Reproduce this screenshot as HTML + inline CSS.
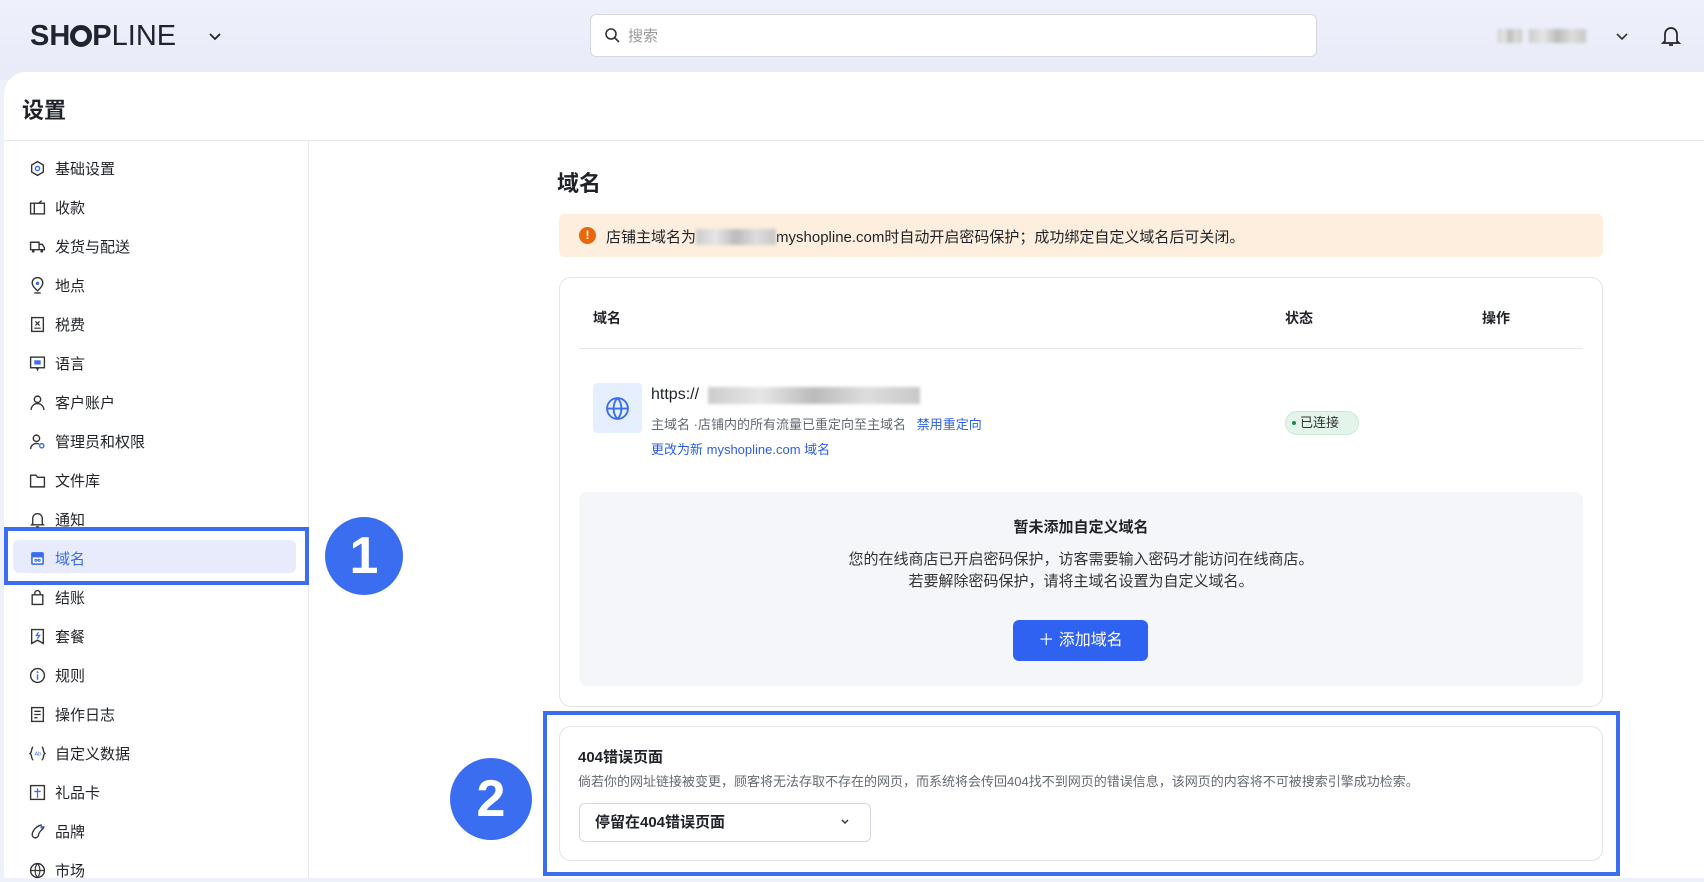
<!DOCTYPE html>
<html><head><meta charset="utf-8"><style>
*{box-sizing:border-box;margin:0;padding:0}
body{width:1704px;height:878px;overflow:hidden;position:relative;font-family:"Liberation Sans","Noto Sans CJK SC",sans-serif;color:#1f2329;background:#eef0fa}
.a{position:absolute}
.hdr{left:0;top:0;width:1704px;height:80px;background:linear-gradient(#eef0fa,#e8ebf8)}
.panel{left:4px;top:72px;width:1700px;height:806px;background:#fff;border-top-left-radius:22px}
.nav{left:29px;font-size:15px;color:#1f2329;display:flex;align-items:center;height:24px}
.nav svg{width:17px;height:17px;margin-right:9px}
.blur{background:linear-gradient(90deg,#ccc,#e6e6e6,#bbb,#ddd,#c8c8c8);filter:blur(1.5px)}
.circ{border-radius:50%;background:#3a6df0;color:#fff;font-size:52px;font-weight:bold;display:flex;align-items:center;justify-content:center;font-family:"Liberation Sans",sans-serif}
</style></head><body>
<div class="a hdr"></div>
<div class="a" style="left:30px;top:20px;font-size:29px;font-weight:bold;letter-spacing:0px;color:#1e2430">SH<span style="display:inline-block;width:22px;height:22px;border:5px solid #1e2430;border-radius:50%;vertical-align:-2px"></span>P<span style="font-weight:normal">LINE</span></div>
<svg class="a" style="left:208px;top:29px" width="14" height="14" viewBox="0 0 14 14"><path d="M2 5l5 5 5-5" stroke="#1e2430" stroke-width="1.8" fill="none"/></svg>
<div class="a" style="left:590px;top:14px;width:727px;height:43px;background:#fff;border:1px solid #d5d8e2;border-radius:6px"></div>
<svg class="a" style="left:604px;top:27px" width="16" height="16" viewBox="0 0 16 16"><circle cx="7" cy="7" r="5" stroke="#333" stroke-width="1.6" fill="none"/><path d="M11 11l4 4" stroke="#333" stroke-width="1.6"/></svg>
<div class="a" style="left:628px;top:25px;font-size:15px;color:#999">搜索</div>
<div class="a blur" style="left:1498px;top:29px;width:24px;height:14px"></div>
<div class="a blur" style="left:1529px;top:29px;width:57px;height:14px"></div>
<svg class="a" style="left:1615px;top:29px" width="14" height="14" viewBox="0 0 14 14"><path d="M2 5l5 5 5-5" stroke="#333" stroke-width="1.6" fill="none"/></svg>
<svg class="a" style="left:1661px;top:24px" width="20" height="24" viewBox="0 0 20 24"><path d="M4 17V10a6 6 0 0 1 12 0v7l2 2H2z M8 21h4" stroke="#222" stroke-width="1.7" fill="none"/></svg>
<div class="a panel"></div>
<div class="a" style="left:22px;top:93px;font-size:22px;font-weight:bold">设置</div>
<div class="a" style="left:4px;top:140px;width:1700px;height:1px;background:#e6e8ee"></div>
<div class="a" style="left:308px;top:140px;width:1px;height:738px;background:#e6e8ee"></div>

<div class="a" style="left:13px;top:540px;width:283px;height:33px;background:#e8ebfb;border-radius:6px"></div>
<div class="a" style="left:4px;top:527px;width:305px;height:58px;border:4px solid #3a6df0"></div>

<div class="a nav" style="top:156px"><svg viewBox="0 0 16 16"><path d="M8 1.5l5.5 3.2v6.6L8 14.5l-5.5-3.2V4.7z" stroke="#333" stroke-width="1.3" fill="none"/><circle cx="8" cy="8" r="2" stroke="#3a6df0" stroke-width="1.3" fill="none"/></svg>基础设置</div>
<div class="a nav" style="top:195px"><svg viewBox="0 0 16 16"><rect x="1.5" y="4" width="13" height="10" stroke="#333" stroke-width="1.3" fill="none"/><path d="M5 4v10M9 4l3-2.5" stroke="#333" stroke-width="1.3" fill="none"/></svg>收款</div>
<div class="a nav" style="top:234px"><svg viewBox="0 0 16 16"><path d="M1.5 4h8v7h-8zM9.5 6h3l2 3v2h-5" stroke="#333" stroke-width="1.3" fill="none"/><circle cx="4" cy="12.5" r="1.3" fill="#333"/><circle cx="12" cy="12.5" r="1.3" fill="#333"/></svg>发货与配送</div>
<div class="a nav" style="top:273px"><svg viewBox="0 0 16 16"><path d="M8 13s-5-4-5-7.5a5 5 0 0 1 10 0C13 9 8 13 8 13zM5 15h6" stroke="#333" stroke-width="1.3" fill="none"/><circle cx="8" cy="6" r="1.6" fill="#3a6df0"/></svg>地点</div>
<div class="a nav" style="top:312px"><svg viewBox="0 0 16 16"><rect x="2.5" y="1.5" width="11" height="13" stroke="#333" stroke-width="1.3" fill="none"/><path d="M6 5l4 4M10 5l-4 4M5 11.5h6" stroke="#333" stroke-width="1.1"/></svg>税费</div>
<div class="a nav" style="top:351px"><svg viewBox="0 0 16 16"><rect x="1.5" y="2" width="13" height="10" stroke="#333" stroke-width="1.3" fill="none"/><path d="M7 12l1 2 1-2" stroke="#333" stroke-width="1.2" fill="none"/><rect x="5" y="5" width="6" height="4" fill="#3a6df0"/></svg>语言</div>
<div class="a nav" style="top:390px"><svg viewBox="0 0 16 16"><circle cx="8" cy="5" r="3" stroke="#333" stroke-width="1.3" fill="none"/><path d="M2 15a6 6 0 0 1 12 0" stroke="#333" stroke-width="1.3" fill="none"/></svg>客户账户</div>
<div class="a nav" style="top:429px"><svg viewBox="0 0 16 16"><circle cx="7" cy="5" r="3" stroke="#333" stroke-width="1.3" fill="none"/><path d="M1.5 15a5.5 5.5 0 0 1 8-4.5" stroke="#333" stroke-width="1.3" fill="none"/><circle cx="12" cy="12" r="2" stroke="#3a6df0" stroke-width="1.3" fill="none"/></svg>管理员和权限</div>
<div class="a nav" style="top:468px"><svg viewBox="0 0 16 16"><path d="M1.5 3h5l1.5 2h6.5v9h-13z" stroke="#333" stroke-width="1.3" fill="none"/></svg>文件库</div>
<div class="a nav" style="top:507px"><svg viewBox="0 0 16 16"><path d="M3.5 12V7a4.5 4.5 0 0 1 9 0v5l1 1h-11zM6.5 15h3" stroke="#333" stroke-width="1.3" fill="none"/></svg>通知</div>
<div class="a nav" style="top:546px;color:#3a6df0"><svg viewBox="0 0 16 16"><rect x="2" y="2" width="12" height="12" rx="1.5" fill="#3a6df0"/><rect x="3.5" y="7" width="9" height="5.5" fill="#fff"/><circle cx="6.5" cy="9.7" r="1" stroke="#3a6df0" fill="none"/><circle cx="9.5" cy="9.7" r="1" stroke="#3a6df0" fill="none"/></svg>域名</div>
<div class="a nav" style="top:585px"><svg viewBox="0 0 16 16"><path d="M3 5.5h10v9H3zM5.5 5.5V4a2.5 2.5 0 0 1 5 0v1.5" stroke="#333" stroke-width="1.3" fill="none"/></svg>结账</div>
<div class="a nav" style="top:624px"><svg viewBox="0 0 16 16"><path d="M2.5 1.5h11v13l-5.5-3-5.5 3z" stroke="#333" stroke-width="1.3" fill="none"/><path d="M9 4l-2 3h3l-2 3" stroke="#3a6df0" stroke-width="1.2" fill="none"/></svg>套餐</div>
<div class="a nav" style="top:663px"><svg viewBox="0 0 16 16"><circle cx="8" cy="8" r="6.5" stroke="#333" stroke-width="1.3" fill="none"/><path d="M8 7v5" stroke="#3a6df0" stroke-width="1.4"/><circle cx="8" cy="4.8" r=".9" fill="#3a6df0"/></svg>规则</div>
<div class="a nav" style="top:702px"><svg viewBox="0 0 16 16"><rect x="2.5" y="1.5" width="11" height="13" stroke="#333" stroke-width="1.3" fill="none"/><path d="M5 5h6M5 8h6M5 11h3" stroke="#333" stroke-width="1.2"/></svg>操作日志</div>
<div class="a nav" style="top:741px"><svg viewBox="0 0 16 16"><path d="M4 2C2 2 3 7 1 8c2 1 1 6 3 6M12 2c2 0 1 5 3 6-2 1-1 6-3 6" stroke="#333" stroke-width="1.3" fill="none"/><text x="5.3" y="10" font-size="5" fill="#3a6df0">Ab</text></svg>自定义数据</div>
<div class="a nav" style="top:780px"><svg viewBox="0 0 16 16"><rect x="1.5" y="1.5" width="13" height="13" stroke="#333" stroke-width="1.3" fill="none"/><path d="M8 4v9M5 7h6" stroke="#3a6df0" stroke-width="1.2"/></svg>礼品卡</div>
<div class="a nav" style="top:819px"><svg viewBox="0 0 16 16"><path d="M12 2c-4 0-9 5-9 9a3 3 0 0 0 6 0c0-3 5-5 5-8" stroke="#333" stroke-width="1.3" fill="none"/><circle cx="12" cy="4" r="1.3" fill="#3a6df0"/></svg>品牌</div>
<div class="a nav" style="top:858px"><svg viewBox="0 0 16 16"><circle cx="8" cy="8" r="6.5" stroke="#333" stroke-width="1.3" fill="none"/><path d="M1.5 8h13M8 1.5c-3 3-3 10 0 13M8 1.5c3 3 3 10 0 13" stroke="#333" stroke-width="1.1" fill="none"/></svg>市场</div>

<div class="a circ" style="left:325px;top:517px;width:78px;height:78px">1</div>
<div class="a circ" style="left:450px;top:758px;width:82px;height:82px">2</div>

<div class="a" style="left:557px;top:166px;font-size:22px;font-weight:bold">域名</div>
<div class="a" style="left:559px;top:214px;width:1044px;height:43px;background:#fdeedd;border-radius:6px"></div>
<div class="a" style="left:579px;top:227px;width:17px;height:17px;border-radius:50%;background:#e8680c;color:#fff;font-size:12px;font-weight:bold;text-align:center;line-height:17px">!</div>
<div class="a" style="left:606px;top:226px;font-size:15px;color:#1f2329;white-space:nowrap">店铺主域名为<span class="blur" style="display:inline-block;width:80px;height:16px;vertical-align:-3px"></span>myshopline.com时自动开启密码保护；成功绑定自定义域名后可关闭。</div>

<div class="a" style="left:559px;top:277px;width:1044px;height:430px;border:1px solid #e2e4ea;border-radius:12px"></div>
<div class="a" style="left:593px;top:308px;font-size:14px;font-weight:bold">域名</div>
<div class="a" style="left:1285px;top:308px;font-size:14px;font-weight:bold">状态</div>
<div class="a" style="left:1482px;top:308px;font-size:14px;font-weight:bold">操作</div>
<div class="a" style="left:579px;top:348px;width:1004px;height:1px;background:#e6e8ee"></div>
<div class="a" style="left:593px;top:383px;width:49px;height:50px;background:#e6efff;border-radius:4px"></div>
<svg class="a" style="left:605px;top:396px" width="25" height="25" viewBox="0 0 24 24"><circle cx="12" cy="12" r="10" stroke="#3a6df0" stroke-width="1.8" fill="none"/><path d="M2 12h20M12 2c-5 5-5 15 0 20M12 2c5 5 5 15 0 20" stroke="#3a6df0" stroke-width="1.8" fill="none"/></svg>
<div class="a" style="left:651px;top:386px;font-size:16px;color:#1f2329">https://</div>
<div class="a blur" style="left:708px;top:387px;width:212px;height:17px"></div>
<div class="a" style="left:651px;top:414px;font-size:13px;color:#646a73">主域名 ·店铺内的所有流量已重定向至主域名 &nbsp;&nbsp;<span style="color:#2c5fe6">禁用重定向</span></div>
<div class="a" style="left:651px;top:439px;font-size:13px;color:#2c5fe6">更改为新 myshopline.com 域名</div>
<div class="a" style="left:1285px;top:411px;width:74px;height:24px;background:#e3f4ea;border:1px solid #cde8d6;border-radius:12px;font-size:13px;line-height:22px;padding-left:14px;color:#333">已连接</div>
<div class="a" style="left:1292px;top:421px;width:4px;height:4px;border-radius:50%;background:#1a8a4a"></div>

<div class="a" style="left:579px;top:492px;width:1004px;height:194px;background:#f5f6f9;border-radius:8px"></div>
<div class="a" style="left:579px;top:516px;width:1004px;text-align:center;font-size:15px;font-weight:bold">暂未添加自定义域名</div>
<div class="a" style="left:579px;top:549px;width:1004px;text-align:center;font-size:15px;color:#333;line-height:22px">您的在线商店已开启密码保护，访客需要输入密码才能访问在线商店。<br>若要解除密码保护，请将主域名设置为自定义域名。</div>
<div class="a" style="left:1013px;top:620px;width:135px;height:41px;background:#2f62f0;border-radius:6px;color:#fff;font-size:16px;line-height:41px;text-align:center">＋ 添加域名</div>

<div class="a" style="left:543px;top:711px;width:1077px;height:165px;border:4px solid #3a6df0"></div>
<div class="a" style="left:559px;top:726px;width:1044px;height:135px;border:1px solid #e2e4ea;border-radius:12px"></div>
<div class="a" style="left:578px;top:746px;font-size:15px;font-weight:bold">404错误页面</div>
<div class="a" style="left:578px;top:771px;font-size:13px;color:#646a73">倘若你的网址链接被变更，顾客将无法存取不存在的网页，而系统将会传回404找不到网页的错误信息，该网页的内容将不可被搜索引擎成功检索。</div>
<div class="a" style="left:579px;top:803px;width:292px;height:39px;border:1px solid #d5d8e0;border-radius:6px;font-size:15px;font-weight:bold;line-height:37px;padding-left:15px">停留在404错误页面</div>
<svg class="a" style="left:840px;top:817px" width="10" height="10" viewBox="0 0 10 10"><path d="M2 3l3 3 3-3" stroke="#333" stroke-width="1.4" fill="none"/></svg>
</body></html>
